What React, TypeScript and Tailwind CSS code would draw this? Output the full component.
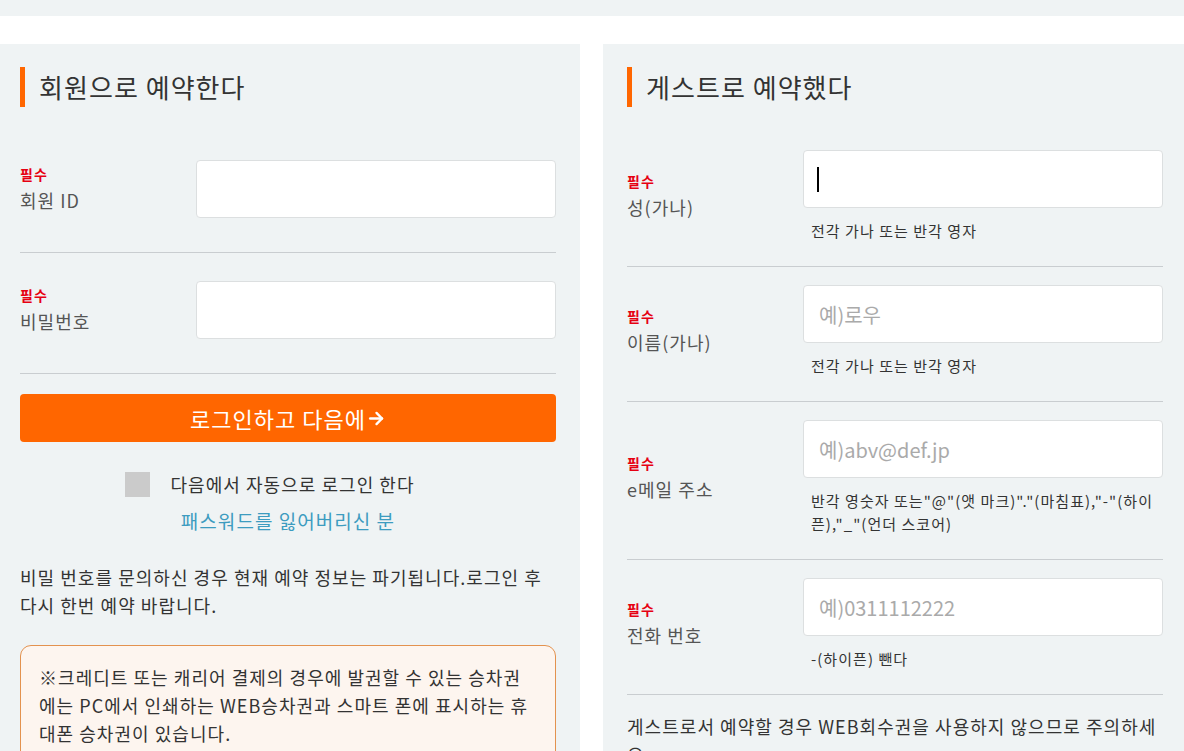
import React from "react";

const F = { fontFamily: '"Noto Sans CJK KR", "Noto Sans", sans-serif' };

function Title({ children }: { children: React.ReactNode }) {
  return (
    <div className="flex items-center pt-[23px] pb-[25px]">
      <div className="w-[5px] h-[40px] bg-[#ff6600]" />
      <h2 className="ml-[14px] text-[26px] leading-[40px] text-[#333]">{children}</h2>
    </div>
  );
}

function Label({ text }: { text: string }) {
  return (
    <div className="w-[176px] shrink-0 flex flex-col">
      <span className="text-[14px] leading-[22px] font-bold text-[#e60012]">필수</span>
      <span className="text-[18px] leading-[30px] text-[#555]">{text}</span>
    </div>
  );
}

function Input({ placeholder, caret }: { placeholder?: string; caret?: boolean }) {
  return (
    <div className="relative flex-1">
      <input
        placeholder={placeholder}
        className="w-full h-[58px] bg-white border border-[#dcdfe0] rounded-[4px] px-[15px] text-[20px] tracking-normal text-[#333] placeholder:text-[#aaa] outline-none"
        style={F}
      />
      {caret && <span className="absolute left-[14px] top-[17px] w-[2px] h-[25px] bg-black" />}
    </div>
  );
}

function LeftRow({ label }: { label: string }) {
  return (
    <div className="flex items-center pt-[28px] pb-[34px] border-b border-[#c9cdd0]">
      <Label text={label} />
      <Input />
    </div>
  );
}

function RightRow({ label, placeholder, hint, caret }: { label: string; placeholder?: string; hint: string; caret?: boolean }) {
  return (
    <div className="flex items-center pt-[18px] pb-[24px] border-b border-[#c9cdd0]">
      <Label text={label} />
      <div className="flex-1 flex flex-col">
        <Input placeholder={placeholder} caret={caret} />
        <p className="mt-[11px] pl-[8px] text-[15px] leading-[23px] text-[#333]">{hint}</p>
      </div>
    </div>
  );
}

export default function App() {
  return (
    <div className="w-[1184px] h-[751px] overflow-hidden bg-white tracking-[0.065em]" style={F}>
      <div className="h-[16px] bg-[#eff3f4]" />
      <div className="h-[28px] bg-white" />
      <div className="flex gap-[23px]">
        <section className="w-[580px] shrink-0 bg-[#eff3f4] pl-[20px] pr-[24px] pb-[40px]">
          <Title>회원으로 예약한다</Title>
          <LeftRow label="회원 ID" />
          <LeftRow label="비밀번호" />
          <button className="mt-[20px] w-full h-[48px] rounded-[4px] bg-[#ff6600] text-white text-[22px] flex items-center justify-center gap-[1px]">
            <span>로그인하고 다음에</span>
            <svg width="19" height="19" viewBox="0 0 24 24" fill="none" stroke="white" strokeWidth="3" strokeLinecap="round" strokeLinejoin="round">
              <path d="M4 12h15" />
              <path d="M12 5l7 7-7 7" />
            </svg>
          </button>
          <div className="mt-[30px] flex items-center justify-center gap-[20px] pr-[36px]">
            <span className="w-[25px] h-[25px] bg-[#cbcbcb]" />
            <span className="text-[18px] leading-[25px] text-[#333]">다음에서 자동으로 로그인 한다</span>
          </div>
          <p className="mt-[10px] text-center text-[19px] leading-[28px] text-[#3d9cc0]">패스워드를 잃어버리신 분</p>
          <p className="mt-[28px] text-[18px] leading-[28px] text-[#333]">
            비밀 번호를 문의하신 경우 현재 예약 정보는 파기됩니다.로그인 후 다시 한번 예약 바랍니다.
          </p>
          <div className="mt-[26px] border border-[#e3924f] bg-[#fdf5ef] rounded-[11px] pt-[17px] pb-[17px] pl-[18px] pr-[18px]">
            <p className="text-[18px] leading-[28px] text-[#333]">
              ※크레디트 또는 캐리어 결제의 경우에 발권할 수 있는 승차권에는 PC에서 인쇄하는 WEB승차권과 스마트 폰에 표시하는 휴대폰 승차권이 있습니다.
            </p>
          </div>
        </section>
        <section className="flex-1 bg-[#eff3f4] pl-[24px] pr-[21px] pb-[40px]">
          <Title>게스트로 예약했다</Title>
          <RightRow label="성(가나)" hint="전각 가나 또는 반각 영자" caret />
          <RightRow label="이름(가나)" placeholder="예)로우" hint="전각 가나 또는 반각 영자" />
          <RightRow
            label="e메일 주소"
            placeholder="예)abv@def.jp"
            hint={'반각 영숫자 또는"@"(앳 마크)"."(마침표),"-"(하이픈),"_"(언더 스코어)'}
          />
          <RightRow label="전화 번호" placeholder="예)0311112222" hint="-(하이픈) 뺀다" />
          <p className="mt-[17px] text-[18px] leading-[28px] text-[#333]">
            게스트로서 예약할 경우 WEB회수권을 사용하지 않으므로 주의하세요.
          </p>
        </section>
      </div>
    </div>
  );
}
